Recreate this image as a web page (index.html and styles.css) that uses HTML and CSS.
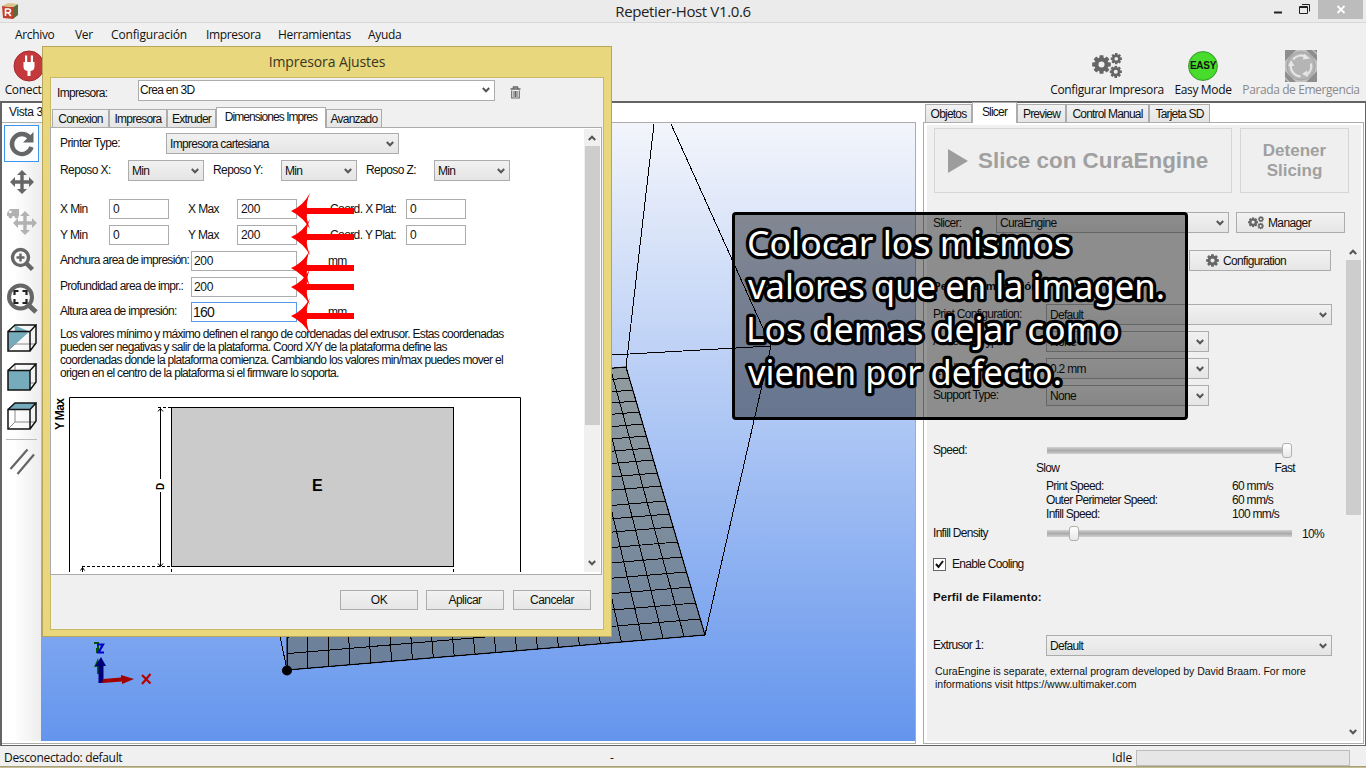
FILE: index.html
```html
<!DOCTYPE html>
<html lang="es">
<head>
<meta charset="utf-8">
<title>Repetier-Host V1.0.6</title>
<link rel="stylesheet" href="styles.css">
</head>
<body>
<svg class="defs" width="0" height="0" aria-hidden="true">
  <symbol id="gear" viewBox="-10 -10 20 20">
    <g fill="currentColor">
      <path fill-rule="evenodd" d="M0-7.4A7.4 7.4 0 1 0 0 7.4 7.4 7.4 0 1 0 0-7.4ZM0-3.2A3.2 3.2 0 1 1 0 3.2 3.2 3.2 0 1 1 0-3.2Z"/>
      <g id="teeth"><path d="M-2-9.8H2L2.4-6H-2.4ZM-2 9.8H2L2.4 6H-2.4ZM9.8-2V2L6 2.4V-2.4ZM-9.8-2V2L-6 2.4V-2.4Z"/></g>
      <use href="#teeth" transform="rotate(45)"/>
    </g>
  </symbol>
  <symbol id="gears" viewBox="0 0 30 26">
    <use href="#gear" x="0" y="2" width="19" height="19"/>
    <use href="#gear" x="18.500" y="0" width="11.500" height="11.500"/>
    <use href="#gear" x="17.500" y="12.500" width="12.500" height="12.500"/>
  </symbol>
  <symbol id="chev" viewBox="0 0 8 6"><path d="M.8 1 4 4.300 7.200 1" fill="none" stroke="#555" stroke-width="2"/></symbol>
  <symbol id="cross" viewBox="-12 -12 24 24"><path fill="currentColor" d="M0-12 5-7H1.700V-1.700H7V-5L12 0 7 5V1.700H1.700V7H5L0 12-5 7H-1.700V1.700H-7V5L-12 0-7-5V-1.700H-1.700V-7H-5Z"/></symbol>
</svg>

<header class="titlebar">
  <svg class="applogo" viewBox="0 0 18 18"><path d="M1 4 12 5V17L2 16Z" fill="#c2402c"/><path d="M12 5 17 2V13L12 17Z" fill="#5d6b3a"/><path d="M1 4 7 1 17 2 12 5Z" fill="#d8c48c"/><path d="M4.500 14V7H7.500Q9.500 7 9.500 8.800 9.500 10.500 7.500 10.700H4.500M7.300 10.700 9.800 14" fill="none" stroke="#fff" stroke-width="1.600"/></svg>
  <h1>Repetier-Host V1.0.6</h1>
  <div class="winbtns">
    <svg width="92" height="19" viewBox="0 0 92 19"><path d="M0 12.500H8" stroke="#222" stroke-width="2"/><path d="M25.500 6.500H33.500V13.500H25.500ZM25 7.500H34M28 4.500H35.500V11.500" fill="none" stroke="#222"/><rect x="44" width="45" height="19" fill="#bcbcbc"/><path d="M63.500 6 70.500 13M70.500 6 63.500 13" stroke="#fff" stroke-width="1.800"/></svg>
  </div>
</header>
<nav class="menu"><span>Archivo</span><span>Ver</span><span class="loose">Configuración</span><span>Impresora</span><span>Herramientas</span><span>Ayuda</span></nav>
<div class="toolbar">
  <div class="tool connect">
    <svg width="32" height="32" viewBox="0 0 32 32"><circle cx="16" cy="16" r="15" fill="#c4393c" stroke="#a8282c"/><path d="M10.500 12H21.500V16.500Q21.500 20.500 17.500 21V26H14.500V21Q10.500 20.500 10.500 16.500ZM12 5.500H14.200V12H12ZM17.800 5.500H20V12H17.800Z" fill="#fff"/></svg>
    <span>Conectar</span>
  </div>
  <div class="tool config"><svg width="30" height="32" viewBox="0 0 30 32" color="#666"><use href="#gears" y="3" width="30" height="26"/></svg><span>Configurar Impresora</span></div>
  <div class="tool easy"><b class="easyball">EASY</b><span>Easy Mode</span></div>
  <div class="tool stop"><svg width="32" height="32" viewBox="0 0 32 32"><rect width="32" height="32" fill="#c3c3c3"/><path d="M0 0H11L0 11ZM21 0H27L32 5V11ZM0 21 11 32H5L0 27ZM32 21V32H21ZM29 0H32V3ZM0 32V29L3 32Z" fill="#8e8e8e"/><circle cx="16" cy="16" r="14.500" fill="#b5b5b5"/><circle cx="16" cy="16" r="14" fill="none" stroke="#a4a4a4"/><g fill="none" stroke="#e6e6e6" stroke-width="2.200"><path d="M8 9.500A10.300 10.300 0 0 1 20 6.500M26 13.500A10.300 10.300 0 0 1 21 25M15.500 26.300A10.300 10.300 0 0 1 6 14"/></g><path d="M19 3.500 25 8.500 18 9.500ZM23 27 17 24 22 20.500ZM3 16 6 10 9.500 16Z" fill="#e6e6e6"/></svg><span>Parada de Emergencia</span></div>
</div>

<main class="work">
  <section class="view">
    <div class="viewtab">Vista 3D</div>
    <div class="viewbody">
      <div class="sidetools">
        <i class="sel"><svg width="28" height="28" viewBox="0 0 28 28"><path d="M21.500 7.500A10 10 0 1 0 23.500 17" fill="none" stroke="#666" stroke-width="4.400"/><path d="M25.500 2V12.500H15Z" fill="#666"/></svg></i>
        <i><svg width="24" height="24" color="#666"><use href="#cross"/></svg></i>
        <i><svg width="32" height="32" viewBox="0 0 32 32" color="#b2b2b2"><use href="#cross" x="7" y="6" width="24" height="24"/><path d="M4 4H13V11H1V8ZM3 6V8H5.500V5.500Z" fill="currentColor" fill-rule="evenodd"/><circle cx="4.500" cy="11.500" r="2" fill="currentColor"/><circle cx="10.500" cy="11.500" r="2" fill="currentColor"/></svg></i>
        <i><svg width="26" height="26" viewBox="0 0 26 26"><circle cx="11.500" cy="10.500" r="8" fill="none" stroke="#666" stroke-width="3.400"/><path d="M17 16 23.500 22.500" stroke="#666" stroke-width="4.500"/><path d="M7.500 10.500H15.500M11.500 6.500V14.500" stroke="#666" stroke-width="2.400"/></svg></i>
        <i><svg width="32" height="32" viewBox="0 0 32 32"><circle cx="14.500" cy="14" r="11.500" fill="none" stroke="#666" stroke-width="4"/><path d="M23 22.500 30 29" stroke="#666" stroke-width="5"/><path d="M8.500 12V8H12.500M16.500 8H20.500V12M20.500 16V20H16.500M12.500 20H8.500V16" fill="none" stroke="#222" stroke-width="2.200"/></svg></i>
        <i><svg width="30" height="28" viewBox="0 0 30 28"><path d="M1 8H22L1 27Z M7 1 20 6.500 22 8 8 7Z" fill="#75abbb"/><path d="M8 20H29M1 27 8 20" fill="none" stroke="#888"/><path d="M1 7.500H23V27H1ZM1 7.500 8 1H29L23 7.500M29 1V19L23 27" fill="none" stroke="#111" stroke-width="1.500"/></svg></i>
        <i><svg width="30" height="28" viewBox="0 0 30 28"><path d="M8 1V7M23 20H29" stroke="#888"/><path d="M1 7.500H23V27H1Z" fill="#75abbb"/><path d="M1 7.500H23V27H1ZM1 7.500 8 1H29L23 7.500M29 1V19L23 27" fill="none" stroke="#111" stroke-width="1.500"/></svg></i>
        <i><svg width="30" height="28" viewBox="0 0 30 28"><path d="M1 7.500 8 1H29L23 7.500Z" fill="#75abbb"/><path d="M8 8V20H29M1 27 8 20" fill="none" stroke="#888"/><path d="M1 7.500H23V27H1ZM1 7.500 8 1H29L23 7.500M29 1V19L23 27" fill="none" stroke="#111" stroke-width="1.500"/></svg></i>
        <hr>
        <svg class="slashes" width="26" height="28" viewBox="0 0 26 28"><path d="M1.500 21 18.500 1.500M8.500 26 25 6.500" stroke="#666" stroke-width="2.200"/></svg>
      </div>
      <svg class="scene" width="874" height="618" viewBox="41 123 874 618">
        <defs>
          <linearGradient id="bed" x1="0" y1="0" x2="0" y2="1"><stop offset="0" stop-color="#919c9e"/><stop offset="1" stop-color="#6a7f9b"/></linearGradient>
        </defs>
        <path d="M287 395 626 367 705 635 287 670Z" fill="url(#bed)" stroke="#000"/>
        <g id="mesh" stroke="#000" shape-rendering="crispEdges"></g>
        <path d="M654 124 626 367M671 124 771 346 705 635M612 355 771 346M280 636 287 670" fill="none" stroke="#000" shape-rendering="crispEdges"/>
        <circle cx="287" cy="670.500" r="5"/>
        <path d="M98 658 94 667H97V674H100Z" fill="#060"/><path d="M98.500 683V666H95L101 657 106 666H103.500V683Z" fill="#00007c"/><path d="M103 679 121 677.500V675L134 679 122 684V681.500L102 683Z" fill="#a30000"/><path d="M142 675 150.500 683.500M150.500 674 142 684" stroke="#b80000" stroke-width="2.200"/><path d="M94 643H98V653M97 648V653" stroke="#050" stroke-width="2" fill="none"/><path d="M97 644.500H103L98.500 652.500H104" stroke="#00c" stroke-width="2.200" fill="none"/>
      </svg>
    </div>
  </section>

  <section class="panel">
    <div class="tabs"><span style="width:47px">Objetos</span><span class="on" style="width:45px">Slicer</span><span style="width:49px">Preview</span><span style="width:83px">Control Manual</span><span style="width:61px">Tarjeta SD</span></div>
    <div class="panelbox">
      <div class="bigbtns">
        <div class="slice"><svg width="20" height="24" viewBox="0 0 20 24"><path d="M0 0 20 12 0 24Z" fill="#9d9d9d"/></svg>Slice con CuraEngine</div>
        <div class="halt">Detener<br>Slicing</div>
      </div>
      <div class="slicerrow"><label>Slicer:</label><div class="select">CuraEngine<svg><use href="#chev"/></svg></div><div class="btn manager"><svg width="16" height="14" color="#666"><use href="#gears"/></svg>Manager</div></div>
      <div class="scroller">
        <div class="form">
          <div class="btn conf"><svg width="13" height="13" color="#666"><use href="#gear"/></svg>Configuration</div>
          <h2 class="h-print">Perfil de Impresión:</h2>
          <div class="frow"><label>Print Configuration:</label><div class="select wide">Default<svg><use href="#chev"/></svg></div></div>
          <div class="frow"><label>Adhesion Type:</label><div class="select">None<svg><use href="#chev"/></svg></div></div>
          <div class="frow"><label>Quality:</label><div class="select">0.2 mm<svg><use href="#chev"/></svg></div></div>
          <div class="frow"><label>Support Type:</label><div class="select">None<svg><use href="#chev"/></svg></div></div>
          <div class="frow slide speed"><label>Speed:</label><div class="track"><b style="margin-left:235px"></b></div></div>
          <div class="ends"><span>Slow</span><span>Fast</span></div>
          <div class="speeds"><span>Print Speed:</span><span>60 mm/s</span><span>Outer Perimeter Speed:</span><span>60 mm/s</span><span>Infill Speed:</span><span>100 mm/s</span></div>
          <div class="frow slide dens"><label>Infill Density</label><div class="track"><b style="margin-left:22px"></b></div><span>10%</span></div>
          <div class="check"><svg width="13" height="13" viewBox="0 0 13 13"><rect x=".5" y=".5" width="12" height="12" fill="#fff" stroke="#666"/><path d="M3 6 5.500 9 10 3" fill="none" stroke="#111" stroke-width="2"/></svg>Enable Cooling</div>
          <h2 class="h-fil">Perfil de Filamento:</h2>
          <div class="frow extr"><label>Extrusor 1:</label><div class="select wide">Default<svg><use href="#chev"/></svg></div></div>
          <p class="note">CuraEngine is separate, external program developed by David Braam. For more<br>informations visit https://www.ultimaker.com</p>
        </div>
        <div class="sbar tall"><svg class="up"><use href="#chev"/></svg><b></b><svg><use href="#chev"/></svg></div>
      </div>
    </div>
  </section>
</main>
<footer class="status"><span class="conn">Desconectado: default</span><span class="dash">-</span><span class="idle">Idle</span><i></i></footer>
<div class="taskedge"></div>

<section class="dialog">
  <h3>Impresora Ajustes</h3>
  <div class="dbody">
    <div class="printer"><label>Impresora:</label><div class="select">Crea en 3D<svg><use href="#chev"/></svg></div>
      <svg class="trash" width="11" height="13" viewBox="0 0 11 13"><path d="M.5 3H10.500M3.500 2.500V1H7.500V2.500" fill="none" stroke="#666" stroke-width="1.500"/><path d="M1.700 4.500V12H9.300V4.500M4 5V11M5.500 5V11M7 5V11" fill="none" stroke="#666" stroke-width="1.100"/></svg></div>
    <div class="tabs dtabs"><span style="width:57px">Conexion</span><span style="width:58px">Impresora</span><span style="width:49px">Extruder</span><span class="on" style="width:110px">Dimensiones Impres</span><span style="width:56px">Avanzado</span></div>
    <div class="dpanel">
      <div class="dcontent">
        <div class="drow type"><label class="l106">Printer Type:</label><div class="select">Impresora cartesiana<svg><use href="#chev"/></svg></div></div>
        <div class="drow home"><label>Reposo X:</label><div class="select">Min<svg><use href="#chev"/></svg></div><label>Reposo Y:</label><div class="select">Min<svg><use href="#chev"/></svg></div><label>Reposo Z:</label><div class="select">Min<svg><use href="#chev"/></svg></div></div>
        <div class="drow lim"><label>X Min</label><div class="inp">0</div><label class="mx">X Max</label><div class="inp">200</div><label class="co">Coord. X Plat:</label><div class="inp">0</div></div>
        <div class="drow lim"><label>Y Min</label><div class="inp">0</div><label class="mx">Y Max</label><div class="inp">200</div><label class="co">Coord. Y Plat:</label><div class="inp">0</div></div>
        <div class="drow area"><label>Anchura area de impresión:</label><div class="inp">200</div><span>mm</span></div>
        <div class="drow area depth"><label>Profundidad area de impr.:</label><div class="inp">200</div></div>
        <div class="drow area"><label>Altura area de impresión:</label><div class="inp focus">160</div><span>mm</span></div>
        <p>Los valores mínimo y máximo definen el rango de cordenadas del extrusor. Estas coordenadas<br>pueden ser negativas y salir de la plataforma. Coord X/Y de la plataforma define las<br>coordenadas donde la plataforma comienza. Cambiando los valores min/max puedes mover el<br>origen en el centro de la plataforma si el firmware lo soporta.</p>
        <svg class="diagram" width="533" height="192" viewBox="51 380 533 192">
          <g fill="none" stroke="#000">
            <path d="M69.500 572V397.500H520.500V572"/>
            <rect x="171.500" y="407.500" width="282" height="159" fill="#cbcbcb"/>
            <path d="M160.500 408V479M160.500 492V566M158 411.500 160.500 408.500 163 411.500M158 563.500 160.500 566.500 163 563.500M82.500 567V572M80.500 570.500 82.500 567.500 84.500 570.500"/>
            <path d="M158 407.500H171M82 566.500H171M171.500 569V572M453.500 569V572" stroke-dasharray="3 2"/>
          </g>
          <g class="dtext"><text transform="translate(64 430) rotate(-90)" textLength="32">Y Max</text><text class="dim" transform="translate(164 490) rotate(-90)">D</text><text class="e" x="312" y="491">E</text></g>
        </svg>
      </div>
      <div class="sbar"><svg class="up"><use href="#chev"/></svg><b></b><svg><use href="#chev"/></svg></div>
    </div>
    <div class="actions"><div class="btn">OK</div><div class="btn">Aplicar</div><div class="btn">Cancelar</div></div>
  </div>
</section>

<svg class="arrows" width="64" height="142" viewBox="291 193 64 142">
  <defs><path id="arrow" d="M0 0Q12-5 19-18Q15-8 16-3H63V3H16Q15 8 19 18Q12 6 0 0Z" fill="#f00"/></defs>
  <use href="#arrow" x="291" y="211"/><use href="#arrow" x="291" y="237"/><use href="#arrow" x="291" y="268"/><use href="#arrow" x="291" y="287"/><use href="#arrow" x="291" y="316"/>
</svg>
<aside class="callout">
  <svg width="450" height="202" viewBox="735 215 450 202">
    <text x="747" y="256" textLength="324" lengthAdjust="spacingAndGlyphs">Colocar los mismos</text>
    <text x="748" y="299" textLength="417" lengthAdjust="spacingAndGlyphs">valores que en la imagen.</text>
    <text x="746" y="342" textLength="374" lengthAdjust="spacingAndGlyphs">Los demas dejar como</text>
    <text x="748" y="385" textLength="314" lengthAdjust="spacingAndGlyphs">vienen por defecto.</text>
  </svg>
</aside>
<script src="mesh.js"></script>
</body>
</html>
```
FILE: styles.css
```css
* { box-sizing: border-box; }
body { margin: 0; width: 1366px; height: 768px; overflow: hidden; position: relative; background: #f0f0f0; color: #111; font: 12px/14px "Liberation Sans", Arial, sans-serif; letter-spacing: -.7px; display: flex; flex-direction: column; }
h1, h2, h3, p { margin: 0; font-weight: 400; }
i { font-style: normal; }
svg { display: block; flex: none; }
.defs { position: absolute; }

.titlebar { height: 23px; flex: none; display: flex; align-items: center; background: #ebebeb; border-bottom: 1px solid #d8d8d8; }
.applogo { width: 18px; height: 18px; margin-left: 1px; }
.titlebar h1 { flex: 1; margin-left: 73px; text-align: center; font: 15px/22px "Open Sans", sans-serif; letter-spacing: -.37px; color: #222; }
.winbtns { width: 92px; align-self: flex-start; }
.menu { height: 24px; flex: none; padding-left: 15px; display: grid; grid-template-columns: 60px 36px 95px 72px 90px 50px; font: 12px/24px "Open Sans", sans-serif; letter-spacing: -.35px; }
.menu .loose { letter-spacing: -.15px; }
.toolbar { height: 54px; flex: none; display: flex; padding-top: 3px; font: 12px/16px "Open Sans", sans-serif; letter-spacing: -.35px; }
.tool { display: flex; flex-direction: column; align-items: center; white-space: nowrap; flex: none; }
.connect { width: 57px; }
.config { margin-left: 987px; width: 126px; }
.easy { width: 66px; }
.stop { width: 130px; color: #8a8a8a; letter-spacing: -.4px; }
.easyball { width: 30px; height: 30px; margin: 1px 0; border-radius: 50%; background: radial-gradient(circle, #48dd2c 60%, #31b81b); border: 1px solid #3a9a30; font: bold 10px/28px "Liberation Sans", sans-serif; text-align: center; letter-spacing: -.3px; }

.work { height: 645px; flex: none; display: flex; background: #fff; border: solid #646464; border-width: 2px 1px 1px 2px; }
.view { width: 917px; flex: none; display: flex; flex-direction: column; }
.viewtab { height: 19px; line-height: 19px; padding-left: 7px; letter-spacing: -.4px; }
.viewbody { display: flex; height: 622px; border-right: 1px solid #acacac; border-top: 1px solid #acacac; border-bottom: 1px solid #acacac; width: 914px; }
.sidetools { width: 39px; height: 618px; display: flex; flex-direction: column; align-items: center; background: linear-gradient(90deg, #fff 30%, #ededed); }
.sidetools i { height: 37px; width: 35px; margin: 1px 0; padding-left: 1px; display: flex; align-items: center; justify-content: center; flex: none; }
.sidetools .sel { margin-top: 2px; margin-bottom: 0; border: 1px solid #3d95f0; background: #fbfdff; }
.sidetools hr { width: 31px; margin: 4px 0 0; border: 0; border-top: 1px solid #bbb; }
.slashes { margin-top: 8px; }
.scene { background: linear-gradient(#f3f5fb, #6495ed); }

.panel { width: 441px; flex: none; display: flex; flex-direction: column; margin-left: 4px; }
.tabs { display: flex; align-items: flex-end; height: 19px; flex: none; padding-left: 2px; letter-spacing: -.8px; }
.tabs span { flex: none; height: 18px; line-height: 18px; text-align: center; background: linear-gradient(#f2f2f2, #e5e5e5); border: 1px solid #acacac; border-bottom: 0; white-space: nowrap; }
.tabs .on { height: 21px; line-height: 18px; background: #fff; margin-bottom: -1px; position: relative; }
.panelbox { width: 441px; height: 622px; border: 1px solid #acacac; background: #f0f0f0; box-shadow: inset 3px 2px #fff, inset -2px -2px #fff; padding: 5px 0 0 10px; }
.bigbtns { display: flex; gap: 8px; }
.slice, .halt { height: 65px; border: 1px solid #d6d6d6; color: #a0a0a0; background: #efefef; font-weight: 700; letter-spacing: 0; }
.slice { width: 298px; flex: none; display: flex; align-items: center; padding-left: 13px; gap: 10px; font-size: 22.400px; }
.halt { width: 109px; flex: none; text-align: center; font-size: 17px; line-height: 20px; padding-top: 12px; }
.select { height: 21px; flex: none; border: 1px solid #acacac; background: linear-gradient(#f1f1f1, #e5e5e5); display: flex; align-items: center; justify-content: space-between; padding: 0 4px 0 3px; white-space: nowrap; }
.select svg { width: 8px; height: 6px; }
.btn { height: 21px; border: 1px solid #acacac; background: linear-gradient(#f2f2f2, #e6e6e6); display: flex; align-items: center; justify-content: center; gap: 4px; }
.slicerrow { display: flex; align-items: center; margin-top: 19px; }
.slicerrow label { width: 63px; margin-left: -1px; }
.slicerrow .select { width: 233px; }
.manager { width: 109px; margin-left: 7px; padding-right: 22px; letter-spacing: -.6px; }
.scroller { display: flex; margin: 10px 2px 0 -1px; height: 498px; }
.form { width: 412px; flex: none; }
.conf { width: 142px; margin: 7px 0 0 256px; padding-right: 28px; letter-spacing: -.65px; }
.form h2 { font-weight: 700; letter-spacing: .1px; font-size: 11.500px; }
.h-print { margin: 8px 0 11px; }
.frow { display: flex; align-items: center; height: 21px; margin-bottom: 6px; }
.frow label { width: 113px; padding-bottom: 1px; }
.frow .select { width: 163px; }
.frow .wide { width: 286px; }
.track { width: 245px; height: 15px; margin-left: 1px; background: linear-gradient(#d2d2d2, #aaa 50%, #d0d0d0) 0 50% / 100% 7px no-repeat; }
.track b { display: block; width: 10px; height: 15px; border: 1px solid #b0b0b0; border-radius: 3px; background: linear-gradient(#fff, #e8e8e8); }
.speed { margin: 34px 0 0; }
.dens span { margin-left: 10px; }
.ends { display: flex; justify-content: space-between; width: 259px; margin-left: 103px; }
.speeds { display: grid; grid-template-columns: 186px auto; margin: 4px 0 0 113px; line-height: 14px; }
.dens { margin: 2px 0 0; }
.check { display: flex; align-items: center; gap: 6px; margin-top: 13px; }
.form .h-fil { margin: 19px 0 31px; }
.note { margin: 9px 0 0 2px; font-size: 10.500px; line-height: 13px; letter-spacing: -.02px; white-space: nowrap; }
.sbar { width: 16px; flex: none; background: #f0f0f0; display: flex; flex-direction: column; align-items: center; justify-content: space-between; padding: 6px 0; }
.sbar svg { width: 8px; height: 6px; }
.sbar .up { transform: rotate(180deg); }
.sbar b { width: 15px; background: #cdcdcd; height: 279px; margin: 5px 0 auto; }
.tall b { height: 255px; }

.status { height: 20px; flex: none; display: flex; align-items: center; font: 12px/16px "Open Sans", sans-serif; letter-spacing: -.33px; padding-top: 3px; }
.conn { width: 606px; padding-left: 4px; }
.dash { width: 505px; padding-left: 4px; }
.idle { width: 25px; padding-left: 1px; letter-spacing: -.1px; }
.status i { width: 214px; height: 16px; border: 1px solid #bcbcbc; background: #e6e6e6; }
.taskedge { height: 2px; background: #c6bd94; border-top: 1px solid #a79f7a; }

.dialog { position: absolute; left: 42px; top: 46px; width: 570px; height: 591px; background: #e8d77d; border: 1px solid #b5a65c; padding: 0 7px 7px; }
.dialog h3 { height: 30px; text-align: center; font: 14px/30px "Open Sans", sans-serif; letter-spacing: -.1px; color: #3a3620; }
.dbody { height: 553px; background: #f0f0f0; border: 1px solid #c8b968; }
.printer { display: flex; height: 29px; padding: 2px 0 0 6px; }
.printer label { width: 81px; padding-top: 6px; }
.printer .select { width: 357px; background: #fff; padding-left: 1px; padding-bottom: 1px; }
.trash { margin: 6px 0 0 15px; }
.dtabs { padding-left: 1px; height: 20px; }
.dtabs .on { letter-spacing: -.95px; }
.dpanel { height: 448px; width: 552px; margin-left: -1px; border: 1px solid #acacac; background: #fff; display: flex; padding: 1px 1px 2px 0; }
.dcontent { width: 533px; flex: none; height: 443px; overflow: hidden; padding-top: 4px; }
.drow { display: flex; align-items: center; padding-left: 9px; height: 20px; margin-bottom: 6px; white-space: nowrap; }
.drow label { flex: none; letter-spacing: -.6px; padding-bottom: 1px; }
.l106 { width: 106px; }
.type .select { width: 233px; }
.type, .home { height: 21px; }
.home { margin-bottom: 18px; }
.home label { width: 68px; }
.home .select { width: 76px; margin-right: 9px; }
.inp { flex: none; height: 20px; width: 60px; border: 1px solid #acacac; padding-left: 3px; line-height: 18px; background: #fff; letter-spacing: -.35px; }
.lim label { width: 49px; }
.lim .mx { margin-left: 19px; }
.lim .co { width: 76px; margin-left: 33px; }
.area label { width: 131px; padding-bottom: 2px; letter-spacing: -.7px; }
.area .inp { width: 106px; margin-right: 31px; padding-left: 2px; }
.depth { margin-bottom: 5px; }
.area .focus { border-color: #569de5; font-size: 14px; letter-spacing: -.8px; padding-left: 1px; }
.dcontent p { margin: 6px 0 0 9px; line-height: 13px; white-space: nowrap; letter-spacing: -.69px; }
.dtext text { font: bold 12px "Liberation Sans", sans-serif; letter-spacing: 0; }
.dtext .dim { font-size: 10px; }
.dtext .e { font-size: 16px; }
.actions { display: flex; gap: 8px; margin: 15px 0 0 289px; letter-spacing: -.5px; }
.actions .btn { width: 78px; height: 20px; }
.actions .btn:last-child { margin-left: 1px; }

.arrows { position: absolute; left: 291px; top: 193px; }
.callout { position: absolute; left: 732px; top: 212px; width: 456px; height: 208px; border: 3px solid #000; border-radius: 4px; background: rgba(0, 0, 0, .41); }
.callout text { font: 34.500px "Noto Sans", sans-serif; letter-spacing: 0; fill: #fff; stroke: #000; stroke-width: 6.500px; stroke-linejoin: round; paint-order: stroke fill; }
```
FILE: mesh.js
```javascript
// Perspective grid of the printer bed: 20 x 20 cells.
const rightY = [635, 619, 603, 587, 572, 557, 542, 527, 514, 501, 486, 473, 460, 448, 436, 424, 412, 401, 390, 378, 367];
const mesh = document.getElementById('mesh');
function line(x1, y1, x2, y2) {
  const l = document.createElementNS('http://www.w3.org/2000/svg', 'line');
  l.setAttribute('x1', x1);
  l.setAttribute('y1', y1);
  l.setAttribute('x2', x2);
  l.setAttribute('y2', y2);
  mesh.appendChild(l);
}
for (let i = 0; i <= 20; i++) {
  line(287 + 20.9 * i, 670 - 1.75 * i, 287 + 18.3 * i - 0.0675 * i * i, 395 - 1.4 * i);
  const t = (635 - rightY[i]) / 268;
  line(287, 670 - 275 * t, 705 - 79 * t, rightY[i]);
}
```
